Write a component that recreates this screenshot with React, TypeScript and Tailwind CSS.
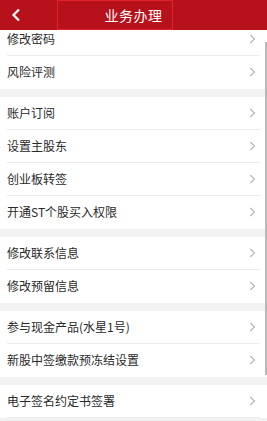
const sections: string[][] = [
  ["修改密码", "风险评测"],
  ["账户订阅", "设置主股东", "创业板转签", "开通ST个股买入权限"],
  ["修改联系信息", "修改预留信息"],
  ["参与现金产品(水星1号)", "新股中签缴款预冻结设置"],
  ["电子签名约定书签署"],
];

function Chevron() {
  return (
    <svg width="7" height="10" viewBox="0 0 7 10" fill="none">
      <path d="M1.2 1 L5.5 5 L1.2 9" stroke="#b4b4b4" strokeWidth="1.1" />
    </svg>
  );
}

function Row({ label, divider }: { label: string; divider: boolean }) {
  return (
    <div className="flex h-[33px] bg-white pl-[7px] pr-[7px]">
      <div
        className={`flex flex-1 items-center justify-between border-b pr-[4px] ${
          divider ? "border-[#ececec]" : "border-transparent"
        }`}
      >
        <span className="text-[12px] text-[#2a2a2a]">{label}</span>
        <Chevron />
      </div>
    </div>
  );
}

export default function App() {
  return (
    <div
      className="relative flex h-[421px] w-[267px] flex-col overflow-hidden bg-[#f2f2f2]"
      style={{ fontFamily: '"Noto Sans CJK SC", "Noto Sans", sans-serif' }}
    >
      <div className="relative z-10 flex h-[30px] shrink-0 items-center justify-center bg-[#b7121b]">
        <div className="absolute left-[11px] top-[8px]">
          <svg width="10" height="14" viewBox="0 0 10 14" fill="none">
            <path d="M8 1.5 L2.5 7 L8 12.5" stroke="#fff" strokeWidth="2.2" />
          </svg>
        </div>
        <span className="text-[14px] tracking-[0.5px] text-white">业务办理</span>
        <div className="pointer-events-none absolute left-[57px] top-0 h-[30px] w-[116px] border border-[#e3232b]" />
      </div>
      <div className="flex-1 overflow-hidden">
        <div className="-mt-[7px] flex flex-col gap-[8px]">
          {sections.map((rows, i) => (
            <div key={i} className="flex flex-col">
              {rows.map((r, j) => (
                <Row
                  key={r}
                  label={r}
                  divider={j < rows.length - 1 || i === sections.length - 1}
                />
              ))}
            </div>
          ))}
        </div>
      </div>
      <div className="absolute right-0 top-[42px] h-[333px] w-[2px] bg-[#b9b9b9]" />
    </div>
  );
}
